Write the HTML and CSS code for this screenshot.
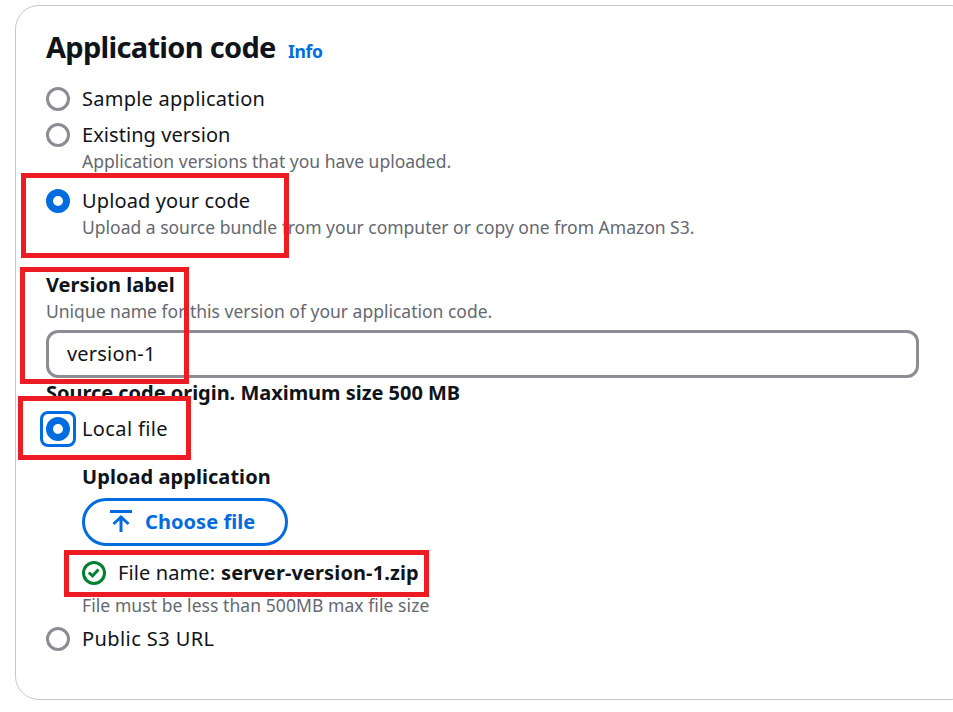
FILE: index.html
```html
<!DOCTYPE html>
<html lang="en">
<head>
<meta charset="utf-8">
<title>Application code</title>
<link rel="stylesheet" href="styles.css">
</head>
<body>
<main class="card">
  <header class="card-header"><h1><span class="t-title">Application code</span></h1><a class="info t-info">Info</a></header>
  <section class="options">
    <div class="option"><span class="radio"></span><span class="label t-sample">Sample application</span></div>
    <div class="option"><span class="radio"></span><div><div class="label"><span class="t-existing">Existing version</span></div><div class="hint"><span>Application versions that you have uploaded.</span></div></div></div>
    <div class="option upload"><span class="radio checked"></span><div><div class="label"><span class="t-upload">Upload your code</span></div><div class="hint"><span>Upload a source bundle from your computer or copy one from Amazon S3.</span></div></div></div>
  </section>
  <section class="version">
    <div class="label strong"><span>Version label</span></div>
    <div class="hint"><span>Unique name for this version of your application code.</span></div>
    <div class="input"><span class="t-input">version-1</span></div>
  </section>
  <section class="origin">
    <div class="label strong"><span class="t-origin">Source code origin. Maximum size 500 MB</span></div>
    <div class="option local"><span class="radio checked focused"></span><span class="label t-local">Local file</span></div>
    <div class="file">
      <div class="label strong"><span class="t-app">Upload application</span></div>
      <button class="choose" type="button">
        <svg class="upload-icon" viewBox="0 0 24 24"><path d="M1 1.500h22M12 22V8M4.500 14L12 7l7.500 7"/></svg>
        <span class="t-choose">Choose file</span>
      </button>
      <div class="file-name label">
        <svg class="ok-icon" viewBox="0 0 24 24"><circle cx="12" cy="12" r="10.500"/><path d="M6.800 11.500l3.700 3.300 6-6.300"/></svg>
        <span class="t-file">File name:</span><strong class="t-zip">server-version-1.zip</strong>
      </div>
      <div class="hint"><span class="t-size">File must be less than 500MB max file size</span></div>
    </div>
    <div class="option s3"><span class="radio"></span><span class="label t-s3">Public S3 URL</span></div>
  </section>
</main>
<div class="mark mark-upload"></div>
<div class="mark mark-version"></div>
<div class="mark mark-local"></div>
<div class="mark mark-file"></div>
</body>
</html>
```
FILE: styles.css
```css
* { box-sizing: border-box; }
body {
  margin: 0;
  height: 712px;
  padding: 5px 0 0 15px;
  overflow: hidden;
  position: relative;
  background: #fff;
  color: #0f141a;
  font-family: "Noto Sans", sans-serif;
  font-size: 20px;
}
.card {
  width: 960px;
  height: 695px;
  padding: 23px 30px 0;
  border: 1px solid #c6c6cd;
  border-radius: 24px;
}
.card-header { display: flex; align-items: baseline; gap: 12px; height: 55px; white-space: nowrap; }
h1 { margin: 0; width: 230px; font-size: 29px; line-height: 36px; font-weight: 700; }
.info { color: #006ce0; font-size: 17.5px; font-weight: 700; }
.options { display: flex; flex-direction: column; gap: 6px; }
.option { display: flex; gap: 12px; }
.upload { margin-top: 6px; }
.label { line-height: 30px; white-space: nowrap; }
.strong { font-weight: 700; }
.hint { padding-bottom: 2px; color: #656871; font-size: 17.5px; line-height: 22px; white-space: nowrap; }
.radio {
  flex: none;
  width: 24px;
  height: 24px;
  margin-top: 3px;
  border: 3px solid #8c8c94;
  border-radius: 50%;
}
.checked { border: 7px solid #006ce0; }
.focused { position: relative; }
.focused::after {
  content: "";
  position: absolute;
  inset: -13px;
  border: 3px solid #006ce0;
  border-radius: 8px;
}
.version { margin-top: 30px; }
.input {
  display: flex;
  align-items: center;
  width: 873px;
  height: 48px;
  margin-top: 6px;
  padding: 0 0 2px 18px;
  border: 3px solid #8c8c94;
  border-radius: 12px;
}
.local { margin-top: 6px; }
.file { margin: 18px 0 0 36px; }
.choose {
  display: flex;
  align-items: center;
  gap: 12px;
  width: 206px;
  height: 48px;
  margin-top: 6px;
  padding: 0 0 0 24px;
  border: 3px solid #006ce0;
  border-radius: 24px;
  background: #fff;
  color: #006ce0;
  font: 700 20px "Noto Sans", sans-serif;
  white-space: nowrap;
}
svg { flex: none; width: 24px; height: 24px; fill: none; stroke: currentColor; stroke-width: 3; }
.file-name { display: flex; align-items: center; margin: 12px 0 6px; }
.ok-icon { margin-right: 12px; color: #00802f; }
.t-file { width: 103px; }
.s3 { margin-top: 6px; }

.t-title { letter-spacing: -0.7px; }
.t-info { letter-spacing: -0.3px; }
.t-sample { letter-spacing: 0.25px; }
.t-existing { letter-spacing: 0.06px; }
.t-upload { letter-spacing: 0.12px; }
.t-input { letter-spacing: 0.2px; }
.t-origin { letter-spacing: -0.03px; }
.t-local { letter-spacing: 0.37px; }
.t-app { letter-spacing: 0.06px; }
.t-choose { padding-bottom: 2px; letter-spacing: 0.06px; }
.t-file { letter-spacing: 0.1px; }
.t-zip { letter-spacing: 0.12px; }
.t-size { letter-spacing: 0.07px; }
.t-s3 { letter-spacing: 0.42px; }

.mark { position: absolute; border: 5px solid #ed1c24; }
.mark-upload { left: 21px; top: 173px; width: 268px; height: 85px; }
.mark-version { left: 20px; top: 267px; width: 169px; height: 117px; }
.mark-local { left: 18px; top: 396px; width: 173px; height: 64px; }
.mark-file { left: 64px; top: 550px; width: 365px; height: 47px; }
```
